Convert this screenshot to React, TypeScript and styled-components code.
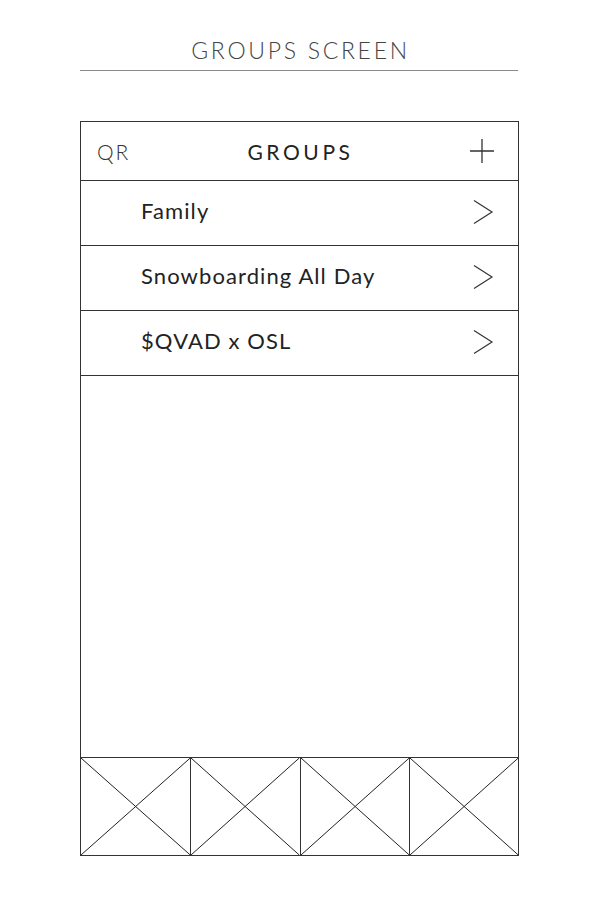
import styled, { createGlobalStyle } from 'styled-components';

const GlobalStyle = createGlobalStyle`
  body {
    margin: 0;
    background: #fff;
    font-family: Lato, "Open Sans", sans-serif;
    color: #222;
  }
`;

const groups = ['Family', 'Snowboarding All Day', '$QVAD x OSL'];

const Chevron = () => (
  <svg width="22" height="26" viewBox="0 0 22 26" fill="none">
    <path d="M2 1.5 L20 13 L2 24.5" stroke="#333" strokeWidth="1.2" />
  </svg>
);

const Plus = () => (
  <svg width="24" height="24" viewBox="0 0 24 24" fill="none">
    <path d="M12 0 V24 M0 12 H24" stroke="#333" strokeWidth="1.3" />
  </svg>
);

const Cross = () => (
  <CrossSvg viewBox="0 0 100 100" preserveAspectRatio="none">
    <path d="M0 0 L100 100 M100 0 L0 100" stroke="#222" strokeWidth="1" vectorEffect="non-scaling-stroke" />
  </CrossSvg>
);

const App: React.FC = () => {
  return (
    <Page>
      <GlobalStyle />
      <ScreenTitle>GROUPS SCREEN</ScreenTitle>
      <TitleRule />
      <Phone>
        <Header>
          <HeaderSide>QR</HeaderSide>
          <HeaderTitle>GROUPS</HeaderTitle>
          <HeaderAction>
            <Plus />
          </HeaderAction>
        </Header>
        {groups.map((name) => (
          <GroupRow key={name}>
            <GroupName>{name}</GroupName>
            <Chevron />
          </GroupRow>
        ))}
        <Spacer />
        <TabBar>
          {[0, 1, 2, 3].map((i) => (
            <TabCell key={i}>
              <Cross />
            </TabCell>
          ))}
        </TabBar>
      </Phone>
    </Page>
  );
};

const Page = styled.div`
  width: 600px;
  height: 900px;
  padding-top: 36px;
  box-sizing: border-box;
`;

const ScreenTitle = styled.h1`
  margin: 0;
  padding-left: 1px;
  text-align: center;
  font-size: 23px;
  line-height: 28px;
  font-weight: 300;
  letter-spacing: 2.7px;
  color: #444;
`;

const TitleRule = styled.div`
  margin: 6px 82px 0 80px;
  border-top: 1px solid #8a8a8a;
`;

const Phone = styled.div`
  margin: 50px 0 0 80px;
  width: 439px;
  height: 735px;
  box-sizing: border-box;
  border: 1px solid #333;
  display: flex;
  flex-direction: column;
`;

const Header = styled.div`
  height: 59px;
  flex-shrink: 0;
  box-sizing: border-box;
  border-bottom: 1px solid #333;
  display: grid;
  grid-template-columns: 80px 1fr 80px;
  align-items: center;
`;

const HeaderSide = styled.div`
  padding-left: 16px;
  font-size: 21px;
  font-weight: 300;
  letter-spacing: 2px;
  color: #333;
`;

const HeaderTitle = styled.div`
  text-align: center;
  padding-left: 2px;
  font-size: 21px;
  font-weight: 400;
  letter-spacing: 3.6px;
  color: #222;
`;

const HeaderAction = styled.div`
  display: flex;
  justify-content: flex-end;
  padding-right: 24px;
`;

const GroupRow = styled.div`
  height: 65px;
  flex-shrink: 0;
  box-sizing: border-box;
  border-bottom: 1px solid #333;
  display: flex;
  align-items: center;
  justify-content: space-between;
  padding: 0 24px 2px 60px;
`;

const GroupName = styled.span`
  font-size: 22px;
  font-weight: 400;
  letter-spacing: 1.1px;
  color: #222;
  margin-top: -3px;
`;

const Spacer = styled.div`
  flex: 1;
`;

const TabBar = styled.div`
  height: 97px;
  flex-shrink: 0;
  border-top: 1px solid #333;
  display: grid;
  grid-template-columns: repeat(4, 1fr);
  grid-template-rows: 97px;
`;

const TabCell = styled.div`
  border-left: 1px solid #333;
  min-height: 0;
  overflow: hidden;

  &:first-child {
    border-left: none;
  }
`;

const CrossSvg = styled.svg`
  display: block;
  width: 100%;
  height: 100%;
`;

export default App;
